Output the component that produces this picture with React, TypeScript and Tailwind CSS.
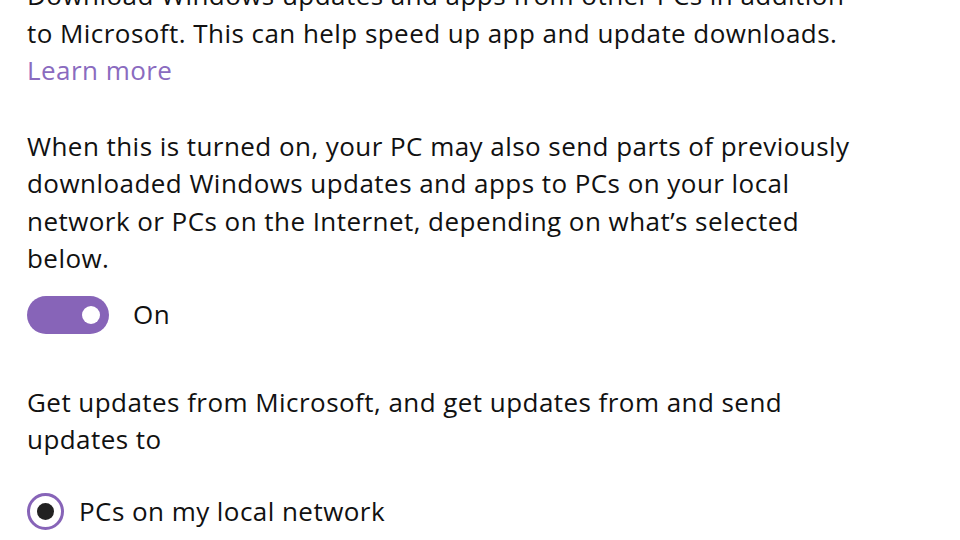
export default function App() {
  return (
    <div
      className="w-[960px] h-[540px] overflow-hidden bg-white text-[#111]"
      style={{ fontFamily: '"Open Sans", "Noto Sans", sans-serif' }}
    >
      <div className="pl-[27px] pr-6 -mt-[23px] text-[26px] leading-[37.5px] tracking-[0.45px]">
        <p>
          Download Windows updates and apps from other PCs in addition
          <br />
          to Microsoft. This can help speed up app and update downloads.
        </p>
        <a className="block text-[#8a6bbf]">Learn more</a>

        <p className="mt-[38px]">
          When this is turned on, your PC may also send parts of previously
          <br />
          downloaded Windows updates and apps to PCs on your local
          <br />
          network or PCs on the Internet, depending on what’s selected
          <br />
          below.
        </p>

        {/* toggle */}
        <div className="mt-[18px] flex items-center gap-[24px]">
          <div className="w-[82px] h-[38px] rounded-full bg-[#8764b8] flex items-center justify-end pr-[9px]">
            <div className="w-[18px] h-[18px] rounded-full bg-white" />
          </div>
          <span>On</span>
        </div>

        <p className="mt-[50px]">
          Get updates from Microsoft, and get updates from and send
          <br />
          updates to
        </p>

        {/* radio */}
        <div className="mt-[34px] flex items-center gap-[15px]">
          <div className="w-[37px] h-[37px] rounded-full border-[3px] border-[#8764b8] flex items-center justify-center">
            <div className="w-[17px] h-[17px] rounded-full bg-[#222]" />
          </div>
          <span>PCs on my local network</span>
        </div>
      </div>
    </div>
  );
}
